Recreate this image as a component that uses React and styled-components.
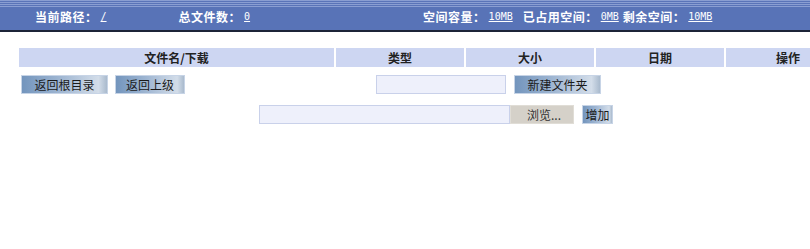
import styled, { createGlobalStyle } from "styled-components";

const GlobalStyle = createGlobalStyle`
  html, body {
    margin: 0;
    padding: 0;
    background: #ffffff;
    overflow: hidden;
  }
  body {
    font-family: "Noto Sans CJK SC", "DejaVu Sans", sans-serif;
    font-size: 12px;
  }
`;

const TopBar = styled.div`
  height: 32px;
  background:
    repeating-linear-gradient(
      to bottom,
      #8a9ed2 0px,
      #8a9ed2 1px,
      #5a74b8 1px,
      #5a74b8 2px
    ) top / 100% 7px no-repeat,
    #5873b7;
  border-bottom: 2px solid #1c2438;
  display: flex;
  align-items: center;
  padding-top: 3px;
  box-sizing: border-box;
  color: #ffffff;
`;

const InfoGroup = styled.div`
  display: flex;
  align-items: center;
  margin-left: ${(p) => p.$left}px;
  white-space: nowrap;
`;

const Label = styled.span`
  font-weight: bold;
  font-size: 12px;
  letter-spacing: 0.5px;
  margin-left: ${(p) => p.$left || 0}px;
`;

const Value = styled.a`
  color: #ffffff;
  font-family: "DejaVu Sans Mono", "Liberation Mono", monospace;
  font-size: 10px;
  text-decoration: underline;
  margin-left: 3px;
`;

const Main = styled.div`
  padding: 16px 0 0 19px;
`;

const HeadRow = styled.div`
  display: grid;
  grid-template-columns: 315px 128px 128px 128px 1fr;
  column-gap: 2px;
`;

const HeadCell = styled.div`
  height: 19px;
  line-height: 19px;
  background: #cdd6f2;
  text-align: center;
  font-weight: bold;
  color: #222222;
  font-size: 12px;
  padding-left: ${(p) => p.$pad || 0}px;
`;

const ToolRow = styled.div`
  display: flex;
  align-items: center;
  margin-top: ${(p) => p.$top}px;
  padding-left: ${(p) => p.$left || 0}px;
  height: 19px;
`;

const BlueButton = styled.button`
  height: 19px;
  width: ${(p) => p.$w}px;
  margin-left: ${(p) => p.$left || 0}px;
  padding: 0;
  border: 1px solid #c7d4e6;
  background: linear-gradient(to right, #7395bd 0%, #9fb6d2 45%, #d3dde9 90%, #a9bacd 100%);
  font-family: "Noto Sans CJK SC", "DejaVu Sans", sans-serif;
  font-size: 12px;
  color: #1a1a1a;
  box-sizing: border-box;
  line-height: 17px;
`;

const GreyButton = styled.button`
  height: 19px;
  width: ${(p) => p.$w}px;
  margin-left: ${(p) => p.$left || 0}px;
  padding: 0 0 0 4px;
  border: 1px solid #e0ddd6;
  background: #d5d1c9;
  font-family: "Noto Sans CJK SC", "DejaVu Sans", sans-serif;
  font-size: 12px;
  color: #333333;
  box-sizing: border-box;
  line-height: 17px;
`;

const TextBox = styled.input`
  height: 19px;
  width: ${(p) => p.$w}px;
  margin-left: ${(p) => p.$left || 0}px;
  border: 1px solid #c9d1ea;
  background: #eef0fb;
  box-sizing: border-box;
  padding: 0 3px;
  outline: none;
`;

export default function App() {
  return (
    <>
      <GlobalStyle />
      <TopBar>
        <InfoGroup $left={35}>
          <Label>当前路径：</Label>
          <Value>/</Value>
        </InfoGroup>
        <InfoGroup $left={72}>
          <Label>总文件数：</Label>
          <Value>0</Value>
        </InfoGroup>
        <InfoGroup $left={173}>
          <Label>空间容量：</Label>
          <Value>10MB</Value>
          <Label $left={10}>已占用空间：</Label>
          <Value>0MB</Value>
          <Label $left={4}>剩余空间：</Label>
          <Value>10MB</Value>
        </InfoGroup>
      </TopBar>
      <Main>
        <HeadRow>
          <HeadCell>文件名/下载</HeadCell>
          <HeadCell>类型</HeadCell>
          <HeadCell>大小</HeadCell>
          <HeadCell>日期</HeadCell>
          <HeadCell $pad={40}>操作</HeadCell>
        </HeadRow>
        <ToolRow $left={2} $top={8}>
          <BlueButton $w={87}>返回根目录</BlueButton>
          <BlueButton $w={70} $left={7}>返回上级</BlueButton>
          <TextBox $w={130} $left={191} />
          <BlueButton $w={87} $left={8}>新建文件夹</BlueButton>
        </ToolRow>
        <ToolRow $left={240} $top={11}>
          <TextBox $w={251} />
          <GreyButton $w={64}>浏览...</GreyButton>
          <BlueButton $w={31} $left={8}>增加</BlueButton>
        </ToolRow>
      </Main>
    </>
  );
}
